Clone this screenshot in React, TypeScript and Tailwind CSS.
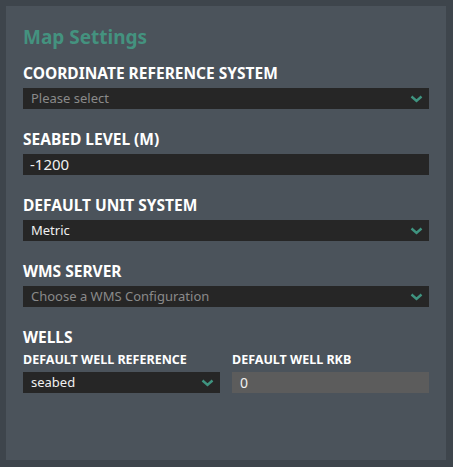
import { ReactNode } from "react";

const Chevron = () => (
  <svg width="13" height="8" viewBox="0 0 13 8" className="shrink-0">
    <path d="M1.5 1.5 L6.5 6 L11.5 1.5" fill="none" stroke="#3f9480" strokeWidth="2.4" />
  </svg>
);

const Label = ({ children }: { children: ReactNode }) => (
  <div className="text-[15.5px] leading-[20px] font-bold text-white mb-[5px]">{children}</div>
);

const SubLabel = ({ children }: { children: ReactNode }) => (
  <div className="text-[12.5px] leading-[16px] font-bold text-white mb-[4px]">{children}</div>
);

const Select = ({ value, placeholder }: { value?: string; placeholder?: string }) => (
  <div className="h-[21px] bg-[#262626] flex items-center justify-between pl-[8px] pr-[6px]">
    <span className={`text-[13px] ${value ? "text-[#f0f0f0]" : "text-[#8a8a8a]"}`}>
      {value ?? placeholder}
    </span>
    <Chevron />
  </div>
);

export default function App() {
  return (
    <div
      className="w-[453px] h-[467px] bg-[#3e454c] p-[6px]"
      style={{ fontFamily: '"Noto Sans", "Open Sans", sans-serif' }}
    >
      <div className="w-[440px] h-[454px] bg-[#4b535b] px-[17px] pt-[19px]">
        <h1 className="text-[19px] leading-[24px] font-bold text-[#44927f] mb-[14px]">Map Settings</h1>

        <div className="flex flex-col gap-[20px]">
          <div>
            <Label>COORDINATE REFERENCE SYSTEM</Label>
            <Select placeholder="Please select" />
          </div>

          <div>
            <Label>SEABED LEVEL (M)</Label>
            <div className="h-[21px] bg-[#262626] flex items-center pl-[7px]">
              <span className="text-[15px] text-[#f0f0f0]">-1200</span>
            </div>
          </div>

          <div>
            <Label>DEFAULT UNIT SYSTEM</Label>
            <Select value="Metric" />
          </div>

          <div>
            <Label>WMS SERVER</Label>
            <Select placeholder="Choose a WMS Configuration" />
          </div>

          <div>
            <Label>WELLS</Label>
            <div className="grid grid-cols-2 gap-[12px]">
              <div>
                <SubLabel>DEFAULT WELL REFERENCE</SubLabel>
                <Select value="seabed" />
              </div>
              <div>
                <SubLabel>DEFAULT WELL RKB</SubLabel>
                <div className="h-[21px] bg-[#5c5c5c] flex items-center pl-[8px]">
                  <span className="text-[14px] text-[#f0f0f0]">0</span>
                </div>
              </div>
            </div>
          </div>
        </div>
      </div>
    </div>
  );
}
